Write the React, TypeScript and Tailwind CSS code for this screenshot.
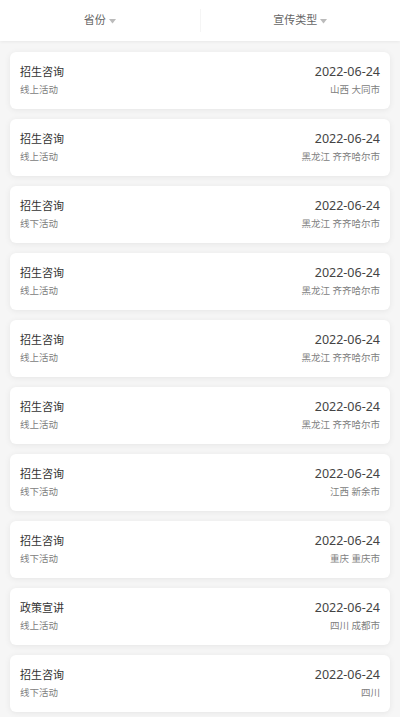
import React from "react";

const items = [
  { t: "招生咨询", s: "线上活动", p: "山西 大同市" },
  { t: "招生咨询", s: "线上活动", p: "黑龙江 齐齐哈尔市" },
  { t: "招生咨询", s: "线下活动", p: "黑龙江 齐齐哈尔市" },
  { t: "招生咨询", s: "线上活动", p: "黑龙江 齐齐哈尔市" },
  { t: "招生咨询", s: "线上活动", p: "黑龙江 齐齐哈尔市" },
  { t: "招生咨询", s: "线上活动", p: "黑龙江 齐齐哈尔市" },
  { t: "招生咨询", s: "线下活动", p: "江西 新余市" },
  { t: "招生咨询", s: "线下活动", p: "重庆 重庆市" },
  { t: "政策宣讲", s: "线上活动", p: "四川 成都市" },
  { t: "招生咨询", s: "线下活动", p: "四川" },
];

const Caret = () => (
  <svg width="7" height="5" viewBox="0 0 7 5" className="ml-[3px] mt-[1px]">
    <path d="M0 0 L7 0 L3.5 4.5 Z" fill="#bbbbbb" />
  </svg>
);

export default function App() {
  return (
    <div
      className="w-[400px] h-[717px] overflow-hidden bg-[#f6f6f6]"
      style={{ fontFamily: '"Noto Sans", "Noto Sans CJK SC", sans-serif' }}
    >
      <div className="h-[41px] bg-white flex items-center shadow-[0_1px_3px_rgba(0,0,0,0.06)] relative z-10">
        <div className="flex-1 flex items-center justify-center text-[11px] text-[#666]">
          省份
          <Caret />
        </div>
        <div className="w-px h-[23px] bg-[#f5f5f5]" />
        <div className="flex-1 flex items-center justify-center text-[11px] text-[#666]">
          宣传类型
          <Caret />
        </div>
      </div>
      <div className="flex flex-col gap-[10px] px-[10px] pt-[11px]">
        {items.map((it, i) => (
          <div
            key={i}
            className="h-[57px] bg-white rounded-[6px] shadow-[0_1px_6px_rgba(0,0,0,0.07)] px-[10px] flex flex-col justify-center"
          >
            <div className="flex justify-between items-center h-[18px]">
              <span className="text-[11px] text-[#333]">{it.t}</span>
              <span className="text-[12.5px] text-[#444]">2022-06-24</span>
            </div>
            <div className="flex justify-between items-center h-[14px] mt-[2px]">
              <span className="text-[9.5px] text-[#808080]">{it.s}</span>
              <span className="text-[9.5px] text-[#808080]">{it.p}</span>
            </div>
          </div>
        ))}
      </div>
    </div>
  );
}
